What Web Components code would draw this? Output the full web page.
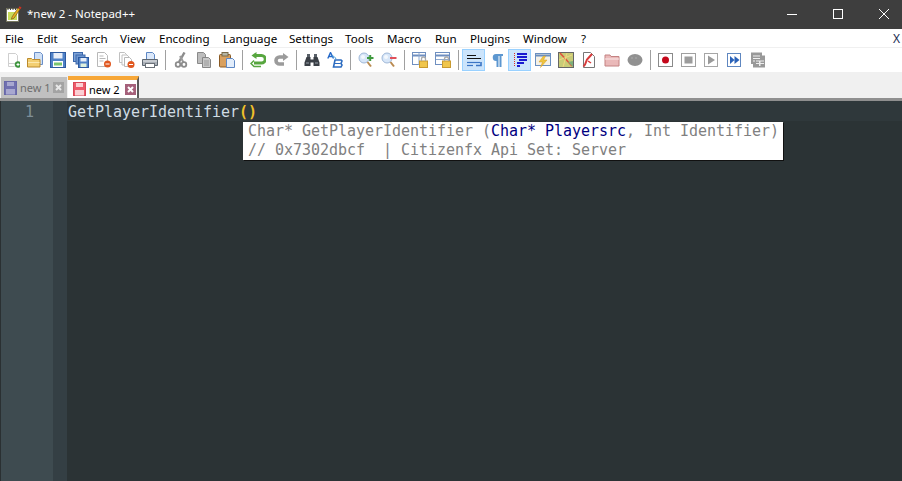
<!DOCTYPE html>
<html><head><meta charset="utf-8"><style>
html,body{margin:0;padding:0;height:100%;overflow:hidden;background:#2b3335}
#app{display:flex;flex-direction:column;width:902px;height:481px;overflow:hidden}
</style></head><body>
<div id="app">
<npp-titlebar>*new 2 - Notepad++</npp-titlebar>
<npp-menubar></npp-menubar>
<npp-toolbar></npp-toolbar>
<npp-tabbar></npp-tabbar>
<npp-editor></npp-editor>
</div>
<script>
function def(name,html,init){customElements.define(name,class extends HTMLElement{constructor(){super();this.attachShadow({mode:'open'}).innerHTML=html;if(init)init(this.shadowRoot)}})}
def('npp-titlebar',`<style>
:host{display:flex;align-items:center;height:29px;background:#3e3e3e;color:#fff;font:11.5px "Noto Sans","Open Sans",sans-serif;flex:none;overflow:hidden}
svg{display:block}
.ic{margin:0 5px 2px 6px;flex:none}
.t{flex:1;padding-bottom:2px}
.w{width:46px;height:27px;padding-bottom:2px;display:flex;align-items:center;justify-content:center;flex:none}
</style>
<svg class="ic" width="16" height="16" viewBox="0 0 16 16"><rect x=".5" y="2.500" width="12" height="13" fill="#fff" stroke="#77775e"/><rect x="2" y="6" width="9" height="8" fill="#c9dc5a"/><path d="M2 1v3M4.500 1v3M7 1v3M9.500 1v3" stroke="#444"/><path d="M6 11l6-9 2 1.200-6 9-2.600 1z" fill="#e8b020" stroke="#6a4a10" stroke-width=".6"/><path d="M12.500 2l1-1.800 2 1.200-1 1.800z" fill="#d03020"/></svg>
<div class="t"><slot></slot></div>
<div class="w"><svg width="10" height="10" viewBox="0 0 10 10"><path d="M0 5.500h10" stroke="#fff"/></svg></div>
<div class="w"><svg width="10" height="10" viewBox="0 0 10 10"><rect x=".5" y=".5" width="9" height="9" fill="none" stroke="#fff"/></svg></div>
<div class="w" style="margin-right:-5px"><svg width="10" height="10" viewBox="0 0 10 10"><path d="M0 0l10 10M10 0L0 10" stroke="#fff" stroke-width="1"/></svg></div>`);
const M=[['File',32],['Edit',34],['Search',49],['View',39],['Encoding',64],['Language',66],['Settings',56],['Tools',42],['Macro',48],['Run',35],['Plugins',53],['Window',58],['?',10]];
def('npp-menubar',`<style>
:host{display:flex;align-items:center;height:18px;background:#fff;color:#000;font:11.6px "Noto Sans","Open Sans",sans-serif;flex:none;padding:1px 2px 0 5px;box-sizing:border-box}
span{white-space:nowrap;flex:none}
.x{margin-left:auto;color:#1c2c50;font-size:12px}
</style>${M.map(m=>`<span style="width:${m[1]}px">${m[0]}</span>`).join('')}<span class="x">X</span>`);
const I={
new:`<path d="M4.500 1.500h7l2 2v8h-9zM4.500 1.500v13h6" fill="#fff" stroke="#cfcfcf"/><circle cx="14" cy="12.500" r="3" fill="#3f9a3f" stroke="#2d7a2d" stroke-width=".5"/><path d="M12.500 12.500h3M14 11v3" stroke="#fff"/>`,
open:`<path d="M7.500 .5h6l2 2v10h-8z" fill="#cfe0f6" stroke="#6a8fc8"/><path d="M.5 6.500h4l1 1h7.500v7.500H.5z" fill="#f3cf72" stroke="#bb8a2c"/><path d="M1 10.500h11.500" stroke="#fbe8ae"/>`,
save:`<rect x=".5" y=".5" width="15" height="15" fill="#4f81c7" stroke="#2d5aa0"/><rect x="3.500" y="1" width="9" height="5.500" fill="#e8eef8"/><rect x="3" y="9" width="10" height="6" fill="#fff"/><rect x="4" y="10.500" width="8" height="3" fill="#79c46f"/>`,
saveall:`<rect x=".5" y=".5" width="9" height="9" fill="#7fa3d6" stroke="#3c68ac"/><rect x="3" y="3" width="9" height="9" fill="#6d96d0" stroke="#3c68ac"/><rect x="5.500" y="5.500" width="10" height="10" fill="#4f81c7" stroke="#2d5aa0"/><rect x="7.500" y="6" width="6" height="3.500" fill="#e8eef8"/><rect x="7.500" y="11.500" width="6" height="3.500" fill="#dff0dc"/>`,
close:`<path d="M1.500 .5h7l3 3v11h-10z" fill="#fff" stroke="#b8b8b8"/><path d="M3.500 4h4M3.500 6.500h6M3.500 9h4" stroke="#b8b8b8"/><circle cx="11.500" cy="12" r="3.500" fill="#e0571f"/><path d="M9.500 12h4" stroke="#fff"/>`,
closeall:`<path d="M.5 .5h5l2 2v8h-7z" fill="#fff" stroke="#c0c0c0"/><path d="M3 3h5l2 2v8H3z" fill="#fff" stroke="#c0c0c0"/><path d="M5.500 5.500h5l2 2v7h-7z" fill="#fff" stroke="#b8b8b8"/><circle cx="12" cy="12.500" r="3.500" fill="#e0571f"/><path d="M10 12.500h4" stroke="#fff"/>`,
print:`<path d="M4.500 .5h6l2 2v5h-8z" fill="#dbe8fa" stroke="#5d87c4"/><path d="M.5 7.500h15v6H.5z" fill="#aab0b8" stroke="#5d6670"/><path d="M1 9h14" stroke="#e5e7ea"/><rect x="3.500" y="11.500" width="9" height="4" fill="#fff" stroke="#6a7078"/>`,
cut:`<path d="M11.500 .5L6 10" stroke="#8c8c8c" stroke-width="2.400"/><path d="M7 4l3.500 6.500" stroke="#9b9b9b" stroke-width="2"/><circle cx="5" cy="12.500" r="2.300" fill="none" stroke="#8c8c8c" stroke-width="1.800"/><circle cx="11" cy="12.500" r="2.300" fill="none" stroke="#8c8c8c" stroke-width="1.800"/>`,
copy:`<path d="M1.500 .5h6l2 2v9h-8z" fill="#bdbdbd" stroke="#8a8a8a"/><path d="M6.500 5.500h6l2 2v8h-8z" fill="#c8c8c8" stroke="#868686"/><path d="M8 9h5M8 11h5M8 13h5" stroke="#9a9a9a"/>`,
paste:`<rect x=".5" y="2.500" width="11" height="12.500" rx="1" fill="#d9a05f" stroke="#8a5a24"/><rect x="3" y=".5" width="6" height="3.500" fill="#b5b5a5" stroke="#7a6a48"/><path d="M7.500 6.500h6l2 2v7h-8z" fill="#e2edfb" stroke="#5d87c4"/>`,
undo:`<path d="M5.500 3.500h6a3.800 3.800 0 0 1 0 7.600H4" fill="none" stroke="#57a63f" stroke-width="3"/><path d="M6.500 0L1.500 3.500 6.500 7z" fill="#57a63f"/><path d="M4 8.500L1 11.500 4 14.500h7" fill="none" stroke="#57a63f" stroke-width="1.500"/>`,
redo:`<path d="M11 5H6.500a3.500 3.500 0 0 0 0 7H11" fill="none" stroke="#9b9b9b" stroke-width="3.600"/><path d="M10 1l5.500 4L10 9z" fill="#9b9b9b"/>`,
find:`<path d="M2.500 5h4v2.500h3V5h4l2 5.500V14H9.500v-3.500h-3V14H.5v-3.500z" fill="#3a3f46"/><rect x="3" y="2" width="3" height="3" fill="#596068"/><rect x="10" y="2" width="3" height="3" fill="#596068"/><path d="M2 11h3M11 11h3" stroke="#9aa2aa"/>`,
replace:`<path d="M.8 6.500L3.500.5l3 6M2 4.500h3.500" fill="none" stroke="#2468c8" stroke-width="1.400"/><path d="M5 4c2 0 3 1 4 3" fill="none" stroke="#3a9ad8"/><path d="M8 8h6l1 1-1 2.500 1 1.500-1 2H6.500z" fill="none" stroke="#2b6bc0" stroke-width="1.600"/><path d="M7.500 11.500h6" stroke="#2b6bc0"/>`,
zoomin:`<circle cx="6" cy="6" r="5" fill="#d7e6f8" stroke="#9fb8d8"/><circle cx="5" cy="5" r="2" fill="#f4f8fd"/><path d="M9.500 10l3.500 4.500" stroke="#b98a50" stroke-width="2"/><path d="M9 6h6.500M12.200 3v6" stroke="#3f9a3f" stroke-width="2"/>`,
zoomout:`<circle cx="6" cy="6" r="5" fill="#d7e6f8" stroke="#9fb8d8"/><circle cx="5" cy="5" r="2" fill="#f4f8fd"/><path d="M9.500 10l3.500 4.500" stroke="#b98a50" stroke-width="2"/><path d="M9 6h6.500" stroke="#e0505a" stroke-width="2"/>`,
syncv:`<rect x=".5" y=".5" width="13" height="12" fill="#fff" stroke="#6f8fc0"/><path d="M1 3.500h13" stroke="#6f8fc0" stroke-width="2"/><path d="M7 1v12" stroke="#8faad0"/><rect x="7.500" y="9" width="8" height="6.500" fill="#f0c64c" stroke="#c89a30"/><path d="M9.500 9V7a2 2 0 0 1 4 0v2" fill="none" stroke="#aaa" stroke-width="1.300"/>`,
synch:`<rect x=".5" y=".5" width="14" height="12" fill="#fff" stroke="#6f8fc0"/><path d="M1 3.500h13" stroke="#6f8fc0" stroke-width="2"/><path d="M1 7.500h13" stroke="#8faad0"/><rect x="7.500" y="9" width="8" height="6.500" fill="#f0c64c" stroke="#c89a30"/><path d="M9.500 9V7a2 2 0 0 1 4 0v2" fill="none" stroke="#aaa" stroke-width="1.300"/>`,
wrap:`<path d="M1 3.500h9M1 6.500h14" stroke="#111" stroke-width="1.200"/><path d="M1 10.500h13" stroke="#3a74c4" stroke-width="1.200"/><path d="M1 13.500h6" stroke="#3a74c4" stroke-width="1.200"/><path d="M15 10v3.500h-5" fill="none" stroke="#3a74c4" stroke-width="1.600"/>`,
para:`<path d="M7 2h7v2h-1.500v11H10.500V4H9.500v11H7.500V9A3.500 3.500 0 0 1 7 2z" fill="#5d97d0"/>`,
indent:`<path d="M2.500 1v14" stroke="#e03020" stroke-dasharray="1 1"/><path d="M5 2h10M5 5h10M7 8h8M5 11h7M5 14h3" stroke="#1a1ad0" stroke-width="1.800"/>`,
bolt:`<rect x=".5" y="1.500" width="15" height="12" fill="#f5f1e6" stroke="#6a8fc0"/><path d="M1 3.500h14" stroke="#6a8fc0" stroke-width="2"/><path d="M8.500 4L4 10h3.500L5.500 15.500 12 8H8.500l2-4z" fill="#efc53e" stroke="#d79a20" stroke-width=".5"/>`,
map:`<rect x=".5" y=".5" width="15" height="15" fill="#c8cc78" stroke="#666"/><path d="M2 1l12 13" stroke="#e0503a" stroke-width="1.500"/><path d="M9 1l-4 14M1 8l13-5" stroke="#f3d880"/><path d="M10 10l5 5V9z" fill="#7fb07a"/>`,
docf:`<path d="M2.500 .5h7l4 4v11h-11z" fill="#fff" stroke="#777"/><path d="M11 2L6 7.500 4 12.500l-1.500 2" fill="none" stroke="#d83a3a" stroke-width="2"/><path d="M7 9l3 2" stroke="#d83a3a" stroke-width="1.500"/>`,
folder:`<path d="M1 3h5l1 1.500h8V14H1z" fill="#eab9b9" stroke="#c48282"/><path d="M1 7h14" stroke="#fbeaea"/>`,
blob:`<ellipse cx="8" cy="8" rx="7.500" ry="6" fill="#919191"/><circle cx="5" cy="6" r=".7" fill="#b6b6b6"/><circle cx="9" cy="6" r=".7" fill="#b6b6b6"/>`,
rec:`<rect x=".5" y="1.500" width="14" height="13" fill="#fff" stroke="#8a8a8a"/><circle cx="7.500" cy="8" r="3.500" fill="#c4061a"/>`,
stop:`<rect x=".5" y="1.500" width="14" height="13" fill="#fff" stroke="#a0a0a0"/><rect x="3.500" y="4.500" width="8" height="7" fill="#9c9c9c"/>`,
play:`<rect x=".5" y="1.500" width="13" height="13" fill="#fff" stroke="#a6a6a6"/><path d="M4 3.500l7 4.500-7 4.500z" fill="#9a9a9a"/>`,
fast:`<rect x=".5" y="1.500" width="13" height="13" fill="#fff" stroke="#5f87c0"/><path d="M3 4l4.500 4L3 12zM7.500 4l5 4-5 4z" fill="#2a62b8"/>`,
savem:`<path d="M1 .5h11v3h3v12H3V12H1z" fill="#999"/><path d="M3 4h7M3 6.500h7M3 9h2" stroke="#f0f0f0"/><path d="M6 9h8M6 11.500h8" stroke="#eee"/><rect x="9" y="9" width="1.500" height="5" fill="#eee"/>`
};
const TB=[['new'],['open'],['save'],['saveall'],['close'],['closeall'],['print'],0,['cut'],['copy'],['paste'],0,['undo'],['redo'],0,['find'],['replace'],0,['zoomin'],['zoomout'],0,['syncv'],['synch'],0,['wrap',1],['para'],['indent',1],['bolt'],['map'],['docf'],['folder'],['blob'],0,['rec'],['stop'],['play'],['fast'],['savem']];
def('npp-toolbar',`<style>
:host{display:flex;align-items:center;height:26px;background:#fff;flex:none;box-sizing:border-box;border-top:1px solid #f0f0f0;border-bottom:1px solid #f0f0f0}
.b{width:23px;height:22px;display:flex;align-items:center;justify-content:center;box-sizing:border-box;flex:none}
.b svg{display:block}
.on{background:#cce4fb;outline:1px solid #99d1ff;outline-offset:-1px}
.s{width:1px;height:20px;background:#a0a0a0;margin:0 3.500px;flex:none}
</style><div id="r" style="display:contents"></div>`,s=>{
 s.getElementById('r').innerHTML=TB.map(t=>t?`<div class="b${t[1]?' on':''}"><svg width="16" height="16" viewBox="0 0 16 16">${I[t[0]]}</svg></div>`:'<div class="s"></div>').join('');
});
const saveTab=(c,d,l)=>`<svg width="13" height="14" viewBox="0 0 13 14" style="flex:none;display:block"><rect x=".5" y=".5" width="12" height="13" fill="${c}" stroke="${d}"/><rect x="3" y="1" width="7" height="4" fill="${l}"/><rect x="2" y="8" width="9" height="5.500" fill="${l}"/></svg>`;
const closeTab=(c,m)=>`<svg width="11" height="11" viewBox="0 0 11 11" style="flex:none;display:block"><rect width="11" height="11" fill="${c}"/><path d="M3 3l5 5M8 3l-5 5" stroke="${m}" stroke-width="2"/></svg>`;
def('npp-tabbar',`<style>
:host{display:flex;align-items:flex-end;height:28px;background:#f0f0f0;flex:none;font:11px "Noto Sans","Open Sans",sans-serif;padding-left:1px;box-sizing:border-box;border-bottom:3px solid #8f8f8f}
.tab{display:flex;align-items:center;box-sizing:border-box;flex:none;white-space:nowrap}
.a{width:66px;height:21px;background:#c0c0c0;color:#6e6e6e;padding-left:3px;margin-right:1px}
.b{width:71px;height:22px;background:#fff;color:#000;padding-left:5px;border-top:4px solid #f7a738;border-right:2px solid #5a5a5a}
.a span{margin:0 5px 0 3px;width:28px}
.b span{margin:0 5px 0 3px;width:31px}
</style><div class="tab a">${saveTab('#7070b0','#6868a8','#a8a8d0')}<span>new 1</span>${closeTab('#a3a3a3','#e8e8e8')}</div>
<div class="tab b">${saveTab('#ee5a6a','#d84858','#fbd0d4')}<span>new 2</span>${closeTab('#a5607a','#fff')}</div>`);
def('npp-calltip',`<style>
:host{position:absolute;left:243px;top:21px;display:block;width:540px;height:38px;background:#fff;padding:0 0 0 5px;box-sizing:border-box;color:#808080;font:15px/19px "DejaVu Sans Mono",monospace;letter-spacing:-.03px;white-space:pre;box-shadow:1px 1px 0 #111}
b{font-weight:normal;color:#00007f}
</style>Char* GetPlayerIdentifier (<b>Char* Playersrc</b>, Int Identifier)
// 0x7302dbcf  | Citizenfx Api Set: Server`);
def('npp-editor',`<style>
:host{display:flex;flex:1;background:#2b3335;position:relative;font:15px/22px "DejaVu Sans Mono",monospace;letter-spacing:-.03px;min-height:0}
.n{width:53px;background:#3e4b50;color:#7f8f98;text-align:right;padding:0 19px 0 0;box-sizing:border-box;height:100%;flex:none;border-left:1px solid #2a3032}
.f{width:14px;background:#343f44;flex:none}
.c{flex:1;min-width:0}
.l{height:20px;background:#2f383b;color:#d0dce4;padding-left:1px;white-space:pre}
i{font-style:normal;color:#f0c02a;font-weight:bold}
</style><div class="n">1</div><div class="f"></div><div class="c"><div class="l">GetPlayerIdentifier<i>()</i></div></div><npp-calltip></npp-calltip>`);
</script>
</body></html>
